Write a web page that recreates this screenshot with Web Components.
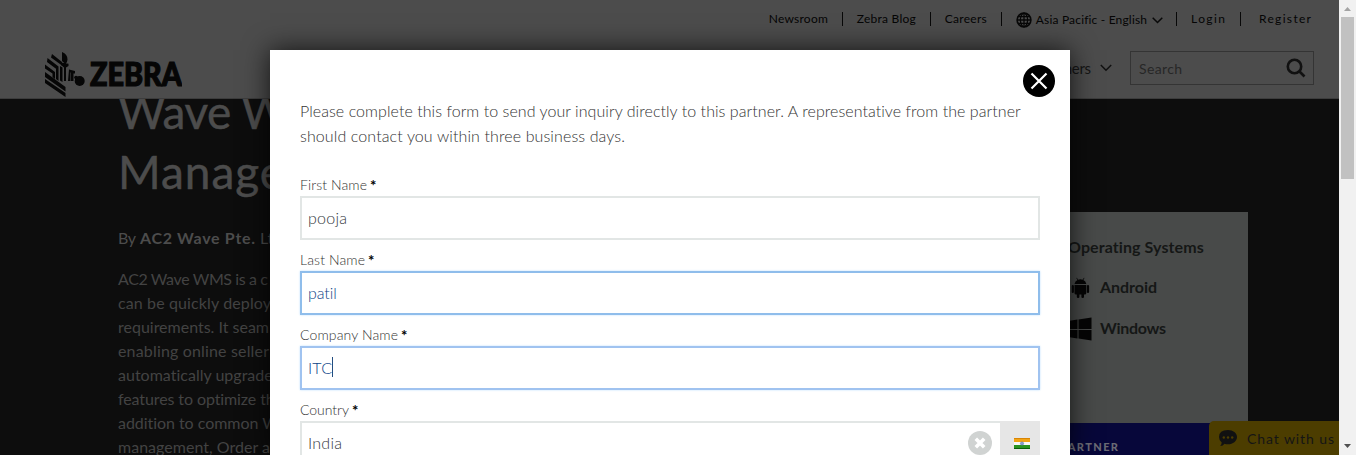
<!DOCTYPE html>
<html lang="en"><head><meta charset="utf-8"><title>Partner inquiry</title>
<style>html,body{margin:0;height:100%;overflow:hidden;background:#0d0d0d}</style></head>
<body><partner-page></partner-page>
<script>
const define=(name,html,after)=>{
  const t=document.createElement('template');t.innerHTML=html;
  customElements.define(name,class extends HTMLElement{
    connectedCallback(){
      if(this.shadowRoot)return;
      this.attachShadow({mode:'open'}).append(t.content.cloneNode(true));
      if(after)after(this,this.shadowRoot);
    }
  });
};

// Text tracked out to a given measure
define('fit-text','<style>:host{display:inline-block;white-space:pre}</style><slot></slot>',el=>{
  const n=el.textContent.length,w=+el.getAttribute('w');
  if(!w)return;
  const nat=el.getBoundingClientRect().width;
  const ls=(w-nat)/Math.max(1,n-1);
  el.style.letterSpacing=ls+'px';
  el.style.marginRight=-ls+'px';
});

define('zebra-logo',`<style>:host{display:block;width:138px;height:48px}svg{display:block}</style>
<svg width="138" height="48" viewBox="44 50 138 48"><g fill="#060606">
<path d="M45 79 65.500 93V97L45 83zM45 72 65.500 87V91.500L45 77zM45 64.500 55 72V79L52.500 77V73.500L45 68.500zM47.500 58 58.500 66.500V81L56 79V68.800L47 62zM52 54 62 62V65.500L51 57.500zM60 66 62.500 67.500V82L60 80.500z"/>
<path d="M62 52q5.500 2 5.500 7.500 0 2.500-2 4.500L62 61zM61 62.500l7.500 1.200v2.300l-2.500 1.500v13.500h-2V67.500L61 65zM69 69.500l6 1.500v2.500h-1.500V81H71v-8.500h-.5V81H68z"/><circle cx="79.700" cy="81" r="5"/><circle cx="76" cy="77.500" r="1.800"/></g>
<text x="90" y="85.500" font-family="Lato" font-weight="900" font-size="32" textLength="92" lengthAdjust="spacingAndGlyphs" fill="#060606" stroke="#060606" stroke-width="1.200">ZEBRA</text></svg>`);

define('nav-rule','<style>:host{display:block;width:1px;height:14px;background:#080808;flex:none}</style>');

define('site-header',`<style>
:host{display:flex;justify-content:space-between;box-sizing:border-box;height:99px;background:#4c4c4c;border-bottom:1px solid #3c3c3c;padding:0 25px 0 44px;color:#050505}
zebra-logo{margin-top:50px}
.right{display:flex;flex-direction:column;align-items:flex-end}
.top{display:flex;align-items:center;height:14px;margin:12px 3px 0 0;font-size:12px;line-height:14px}
.top nav-rule{margin:0 14px}
.region{display:flex;align-items:center;position:relative;top:1px}
.main{display:flex;align-items:center;height:34px;margin-top:25px;font-size:15px;color:#151515}
.search{display:flex;align-items:center;justify-content:space-between;box-sizing:border-box;width:184px;height:34px;border:1px solid #343434;padding:0 7px 0 8px;margin-left:18px;color:#272727;font-size:14px}
svg{display:block}
</style>
<zebra-logo></zebra-logo>
<div class="right"><div class="top">
<fit-text w="59">Newsroom</fit-text><nav-rule></nav-rule><fit-text w="59">Zebra Blog</fit-text><nav-rule></nav-rule><fit-text w="42">Careers</fit-text><nav-rule></nav-rule>
<span class="region"><svg width="16" height="16" viewBox="0 0 16 16"><g fill="none" stroke="#080808" stroke-width="1.300"><circle cx="8" cy="8" r="6.900" stroke-width="1.600"/><ellipse cx="8" cy="8" rx="3.600" ry="6.800"/><path d="M8 1v14M1 8h14M2.300 4.600h11.400M2.300 11.400h11.400"/></g></svg><fit-text w="111" style="margin-left:4px">Asia Pacific - English</fit-text><svg width="11" height="7" viewBox="0 0 11 7" style="margin-left:5px"><path d="M.7.7 5.500 5.500 10.300.7" fill="none" stroke="#080808" stroke-width="1.500"/></svg></span>
<nav-rule style="margin-left:13px"></nav-rule><fit-text w="34">Login</fit-text><nav-rule style="margin:0 18px 0 15px"></nav-rule><fit-text w="52">Register</fit-text></div>
<div class="main"><fit-text w="53">Partners</fit-text><svg width="12" height="8" viewBox="0 0 12 8" style="margin-left:9px"><path d="M.8 1 6 6.200 11.200 1" fill="none" stroke="#111" stroke-width="1.500"/></svg>
<div class="search"><fit-text w="43">Search</fit-text><svg width="20" height="20" viewBox="0 0 20 20"><g fill="none" stroke="#111" stroke-width="2.600"><circle cx="8.500" cy="8.500" r="6.700"/><path d="m13.500 13.500 5 5"/></g></svg></div></div></div>`);

define('product-copy',`<style>
:host{display:block;width:300px;padding-left:118px;color:#4c4c4c;font-size:16px;line-height:24px;margin-top:-17px}
h1{font-size:46px;line-height:60px;font-weight:400;margin:0;display:flex;flex-direction:column;align-items:flex-start;-webkit-text-stroke:.5px #4c4c4c}
.by{margin:24px 0 17px;white-space:nowrap}.by b{margin:0 5px 0 4px}
.copy{display:flex;flex-direction:column;align-items:flex-start;color:#434343}
</style>
<h1><fit-text w="171">Wave W</fit-text><fit-text w="166">Manage</fit-text></h1>
<div class="by"><fit-text w="18">By</fit-text><b><fit-text w="115">AC2 Wave Pte.</fit-text></b><fit-text>Ltd</fit-text></div>
<div class="copy"><fit-text w="150">AC2 Wave WMS is a c</fit-text><fit-text w="153">can be quickly deploy</fit-text><fit-text w="151">requirements. It seam</fit-text><fit-text w="151">enabling online seller</fit-text><fit-text w="155">automatically upgrade</fit-text><fit-text w="157">features to optimize th</fit-text><fit-text w="161">addition to common W</fit-text><fit-text w="152">management, Order a</fit-text></div>`);

define('os-item','<style>:host{display:flex;align-items:center;height:41px;font-weight:700}::slotted(svg){display:block;width:24px;height:24px;margin-right:8px;position:relative;top:1px}</style><slot name="icon"></slot><slot></slot>');

define('os-panel',`<style>
:host{display:flex;flex-direction:column;width:190px;height:243px;margin-top:113px;color:#151716;font-size:16px}
.body{flex:0 0 211px;box-sizing:border-box;background:#484a49;padding:23px 0 0 10px}
.title{font-weight:700;line-height:24px;margin-bottom:7px}
.foot{flex:1;background:#07073a;color:#6a6a74;font-weight:900;font-size:11px;line-height:48px;padding-left:2px}
</style>
<div class="body"><div class="title"><fit-text w="136">Operating Systems</fit-text></div>
<os-item><svg slot="icon" viewBox="0 0 24 24"><path fill="#050505" d="M6.500 8q.5-3 3-4L8.300 2l.5-.3L10.200 3.700q2.300-.7 4.300 0L16 1.700l.5.3L15.300 4q2.500 1 3 4zM6.500 9h11.800v8q0 1.500-1.500 1.500h-.8V21q0 1-1.300 1t-1.300-1v-2.500h-2V21q0 1-1.300 1T8.800 21v-2.500H8Q6.500 18.500 6.500 17z"/><path stroke="#050505" stroke-width="2.200" stroke-linecap="round" d="M4.800 10v6M20 10v6"/></svg><fit-text w="57">Android</fit-text></os-item>
<os-item><svg slot="icon" viewBox="0 0 24 24"><path fill="#050505" d="M0 4 9.500 2.600V12H0zM10.500 2.400 23.500.600V12h-13zM0 13h9.500v8.500L0 20zM10.500 13h13v10.400l-13-1.800z"/></svg><fit-text w="66">Windows</fit-text></os-item></div>
<div class="foot"><fit-text w="58">PARTNER</fit-text></div>`);

define('chat-tab',`<style>
:host{display:flex;align-items:center;box-sizing:border-box;width:130px;height:34px;border-radius:5px 0 0 0;background:#4c3d00;padding-left:10px;color:#151515;font-size:14px}
svg{display:block;margin-right:10px}</style>
<svg width="18" height="18" viewBox="0 0 18 18"><path fill="#111" d="M9 1c5 0 9 3 9 7s-4 7.300-9 7.300q-2 0-3.500-.5Q4 17 1.200 17q1.500-1.800 1.500-3.500Q0 11.500 0 8q0-7 9-7z"/><g fill="#4c3d00"><circle cx="4.800" cy="8.500" r="1.200"/><circle cx="9" cy="8.500" r="1.200"/><circle cx="13.200" cy="8.500" r="1.200"/></g></svg><fit-text w="87">Chat with us</fit-text>`);

define('form-field',`<style>
:host{display:block;--line:#e2e6e5;--ink:#33373d;color:#333}
:host([filled]){--line:#8fbdeb;--ink:#0d4387}
:host([focused]){--line:#a0c3f0;--ink:#0d4387}
.label{display:flex;height:22px;line-height:22px;font-size:14px}
.star{color:#000;margin-left:3px;font-weight:700;font-size:15px}
.box{display:flex;justify-content:space-between;box-sizing:border-box;height:44px;border:2px solid var(--line);color:var(--ink);font-size:16px;background:#fff}
:host([filled]) .box,:host([focused]) .box{box-shadow:0 0 2px #bde0ff}
.value{display:flex;align-items:center;height:38px;padding-left:6px}
:host([focused]) .value::after{content:"";width:1px;height:20px;background:#234d80}
</style><div class="label"><slot name="label"></slot><span class="star">*</span></div><div class="box"><span class="value"><slot></slot></span><slot name="end"></slot></div>`);

define('country-end',`<style>:host{display:flex;align-items:center}
.flag{display:flex;align-items:center;justify-content:center;width:40px;height:44px;margin-right:-2px;background:#e6e6e6}
svg{display:block}.clear{margin-right:8px}</style>
<svg class="clear" width="24" height="24" viewBox="0 0 24 24"><circle cx="12" cy="12" r="12" fill="#d0d3d2"/><path d="m7.800 7.800 8.400 8.400m0-8.400-8.400 8.400" stroke="#fff" stroke-width="3.600"/></svg>
<span class="flag"><svg width="16" height="11" viewBox="0 0 16 11" style="margin-left:4px"><path fill="#f2a415" d="M0 0h16v4H0z"/><path fill="#d98505" d="M0 0h16v1H0z"/><path fill="#f8f8f8" d="M0 4h16v3H0z"/><path fill="#2a9420" d="M0 7h16v4H0z"/><path fill="#0b5f0b" d="M0 10h16v1H0z"/><circle cx="8" cy="5.500" r="1.600" fill="#8aa0cd" stroke="#5c76b0" stroke-width=".6"/></svg></span>`);

define('inquiry-dialog',`<style>
:host{display:block;box-sizing:border-box;width:800px;height:405px;background:#fff;padding:48px 30px 0;box-shadow:0 0 25px rgba(0,0,0,.75);font-weight:300}
.intro{color:#333;font-size:16px;line-height:25px;height:50px;margin-bottom:26px}
.intro fit-text{display:table}
form{display:flex;flex-direction:column;gap:9px;height:281px;overflow:hidden;margin:0 -3px;padding:0 3px}
form-field{flex:none}
.close{position:absolute;right:15px;top:15px;width:32px;height:32px}
</style>
<svg class="close" viewBox="0 0 32 32"><circle cx="16" cy="16" r="16"/><path d="m8.500 8.500 15 15m0-15-15 15" stroke="#fff" stroke-width="2.200"/></svg>
<div class="intro"><fit-text w="721">Please complete this form to send your inquiry directly to this partner. A representative from the partner</fit-text><fit-text w="325">should contact you within three business days.</fit-text></div>
<form><form-field><fit-text slot="label" w="67">First Name</fit-text><fit-text w="39">pooja</fit-text></form-field>
<form-field filled><fit-text slot="label" w="65">Last Name</fit-text><fit-text w="29">patil</fit-text></form-field>
<form-field focused><fit-text slot="label" w="98">Company Name</fit-text><fit-text w="24">ITC</fit-text></form-field>
<form-field><fit-text slot="label" w="49">Country</fit-text><fit-text w="34">India</fit-text><country-end slot="end"></country-end></form-field></form>`);

define('scroll-bar',`<style>:host{display:flex;flex-direction:column;align-items:center;width:17px;height:455px;background:#f1f1f1}
svg{display:block;flex:none}.thumb{width:13px;height:162px;background:#c1c1c1}.gap{flex:1}</style>
<svg width="17" height="17"><path d="M5 11h7L8.500 7z" fill="#a3a3a3"/></svg><div class="thumb"></div><div class="gap"></div><svg width="17" height="17"><path d="M5 6h7l-3.500 4z" fill="#505050"/></svg>`);

define('partner-page',`<style>
:host{display:flex;position:relative;width:1356px;height:455px;overflow:hidden;font-family:Lato,"Liberation Sans",sans-serif}
.page{display:flex;flex-direction:column;width:1339px;height:455px;overflow:hidden;background:#0d0d0d}
.hero{display:flex;justify-content:space-between;height:356px;overflow:hidden;padding-right:91px}
inquiry-dialog{position:absolute;left:270px;top:50px}
chat-tab{position:absolute;left:1209px;top:421px}
</style>
<div class="page"><site-header></site-header><div class="hero"><product-copy></product-copy><os-panel></os-panel></div></div><scroll-bar></scroll-bar><chat-tab></chat-tab><inquiry-dialog></inquiry-dialog>`);
</script></body></html>
